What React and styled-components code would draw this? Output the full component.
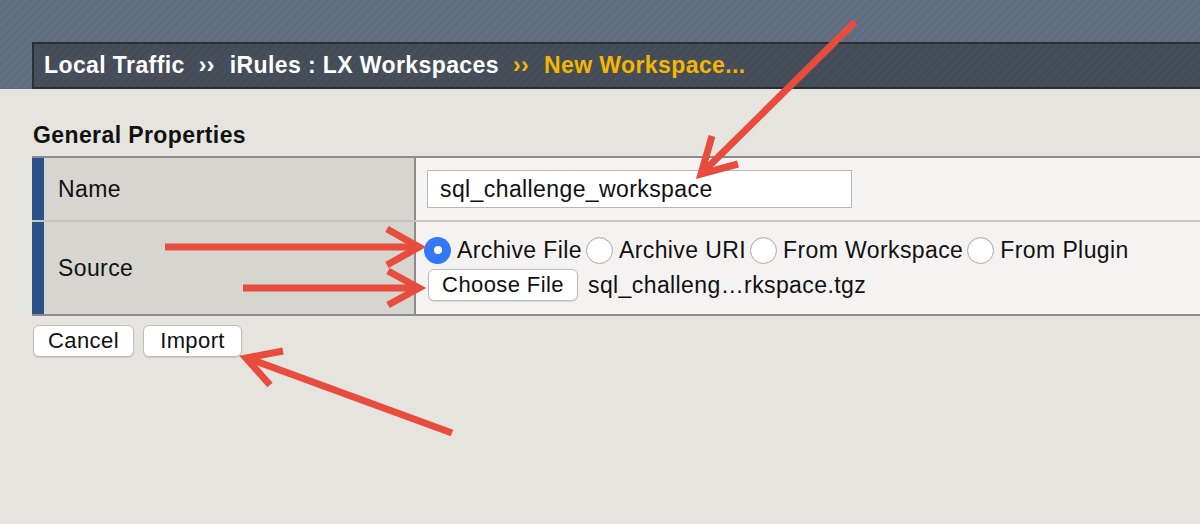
import React from 'react';
import styled, { createGlobalStyle } from 'styled-components';

const GlobalStyle = createGlobalStyle`
  html, body {
    margin: 0;
    padding: 0;
    background: #e5e4df;
  }
  body {
    font-family: 'Liberation Sans', Arial, sans-serif;
    color: #111;
  }
`;

const Page = styled.div`
  position: relative;
  width: 1200px;
  height: 524px;
  overflow: hidden;
  background: #e5e4df;
`;

// top band with the faint diagonal stripes
const Header = styled.div`
  padding-top: 42px;
  padding-left: 32px;
  background: repeating-linear-gradient(
    -45deg,
    #5f6c7f 0px,
    #5f6c7f 3px,
    #637084 3px,
    #637084 6px
  );
`;

const Breadcrumb = styled.div`
  display: flex;
  align-items: center;
  height: 43px;
  padding-left: 10px;
  border: 2px solid #2b2e33;
  border-right: none;
  background: repeating-linear-gradient(
    -45deg,
    #434c57 0px,
    #434c57 3px,
    #464f5a 3px,
    #464f5a 6px
  );
  font-size: 23px;
  font-weight: 700;
  letter-spacing: 0.4px;
  color: #fff;
  white-space: nowrap;
`;

const Crumb = styled.span`
  color: ${props => props.current ? '#f7b500' : '#fff'};
`;

const Sep = styled.span`
  margin: 0 15px 0 14px;
  color: ${props => props.current ? '#f7b500' : '#fff'};
`;

const Content = styled.div`
  padding: 33px 0 0 32px;
`;

const SectionTitle = styled.div`
  margin-left: 1px;
  font-size: 23px;
  line-height: 26px;
  font-weight: 700;
  letter-spacing: 0.4px;
  margin-bottom: 8px;
`;

const Table = styled.div`
  border-top: 2px solid #8c8c8c;
  border-bottom: 2px solid #8c8c8c;
`;

const Row = styled.div`
  display: grid;
  grid-template-columns: 384px 1fr;
  height: ${props => props.h}px;
  border-bottom: ${props => props.last ? 'none' : '2px solid #c6c5c1'};
`;

const Label = styled.div`
  display: flex;
  align-items: center;
  padding-left: 14px;
  border-left: 12px solid #2a5286;
  border-right: 2px solid #8c8c8c;
  background: #d6d5d0;
  font-size: 23px;
  letter-spacing: 0.4px;
`;

const Cell = styled.div`
  display: flex;
  flex-direction: column;
  align-items: flex-start;
  padding: ${props => props.pad};
  background: #f4f3f1;
`;

const TextInput = styled.input`
  box-sizing: border-box;
  width: 425px;
  height: 38px;
  padding: 0 12px;
  border: 1px solid #b8b8b8;
  background: #fff;
  font-family: 'Liberation Sans', Arial, sans-serif;
  font-size: 23px;
  letter-spacing: 0.4px;
  color: #111;
  outline: none;
`;

const RadioGroup = styled.div`
  display: flex;
  align-items: center;
  height: 30px;
  margin-left: -4px;
  font-size: 23px;
  letter-spacing: 0.4px;
  white-space: nowrap;
`;

const RadioOption = styled.label`
  display: flex;
  align-items: center;
  margin-right: 4px;
`;

const RadioDot = styled.span`
  box-sizing: border-box;
  display: flex;
  align-items: center;
  justify-content: center;
  width: 27px;
  height: 27px;
  margin-right: 6px;
  border-radius: 50%;
  background: ${props => props.checked ? '#3478f6' : '#fff'};
  border: ${props => props.checked ? 'none' : '1px solid #a9a9a9'};
  box-shadow: ${props => props.checked ? 'none' : 'inset 0 1px 1px rgba(0,0,0,0.08)'};

  &::after {
    content: '';
    display: ${props => props.checked ? 'block' : 'none'};
    width: 8px;
    height: 8px;
    border-radius: 50%;
    background: #fff;
  }
`;

const FileRow = styled.div`
  display: flex;
  align-items: center;
  margin-top: 4px;
  font-size: 23px;
  letter-spacing: 0.4px;
`;

const Button = styled.button`
  box-sizing: border-box;
  width: ${props => props.w}px;
  height: 32px;
  padding: 0;
  border: 1px solid #bdbdbd;
  border-radius: 6px;
  background: #fff;
  box-shadow: 0 1px 1px rgba(0,0,0,0.12);
  font-family: 'Liberation Sans', Arial, sans-serif;
  font-size: 22px;
  letter-spacing: 0.4px;
  color: #111;
  cursor: pointer;
`;

const FileName = styled.span`
  margin-left: 10px;
`;

const Actions = styled.div`
  display: flex;
  gap: 9px;
  margin: 9px 0 0 1px;
`;

const Arrows = styled.svg`
  position: absolute;
  left: 0;
  top: 0;
  pointer-events: none;
`;

const arrows = [
  { line: 'M855,22 L701,174', head: 'M712,136 L701,174 L738,164' },
  { line: 'M165,247 L418,247', head: 'M387,229 L419,247 L387,265' },
  { line: 'M243,288 L418,288', head: 'M388,271 L419,288 L388,305' },
  { line: 'M452,433 L247,358', head: 'M283,351 L246,358 L270,385' },
];

const sources = ['Archive File', 'Archive URI', 'From Workspace', 'From Plugin'];

export default function App() {
  return (
    <Page>
      <GlobalStyle />
      <Header>
        <Breadcrumb>
          <Crumb>Local Traffic</Crumb>
          <Sep>››</Sep>
          <Crumb>iRules : LX Workspaces</Crumb>
          <Sep current>››</Sep>
          <Crumb current>New Workspace...</Crumb>
        </Breadcrumb>
      </Header>
      <Content>
        <SectionTitle>General Properties</SectionTitle>
        <Table>
          <Row h={62}>
            <Label>Name</Label>
            <Cell pad="12px 0 0 11px">
              <TextInput defaultValue="sql_challenge_workspace" />
            </Cell>
          </Row>
          <Row h={92} last>
            <Label>Source</Label>
            <Cell pad="13px 0 0 12px">
              <RadioGroup>
                {sources.map((s, i) => (
                  <RadioOption key={s}>
                    <RadioDot checked={i === 0} />
                    {s}
                  </RadioOption>
                ))}
              </RadioGroup>
              <FileRow>
                <Button w={150}>Choose File</Button>
                <FileName>sql_challeng…rkspace.tgz</FileName>
              </FileRow>
            </Cell>
          </Row>
        </Table>
        <Actions>
          <Button w={101}>Cancel</Button>
          <Button w={99}>Import</Button>
        </Actions>
      </Content>
      <Arrows width="1200" height="524" viewBox="0 0 1200 524">
        {arrows.map((a, i) => (
          <g key={i} stroke="#e84c3d" strokeWidth="7" fill="none" strokeLinejoin="miter">
            <path d={a.line} />
            <path d={a.head} />
          </g>
        ))}
      </Arrows>
    </Page>
  );
}
